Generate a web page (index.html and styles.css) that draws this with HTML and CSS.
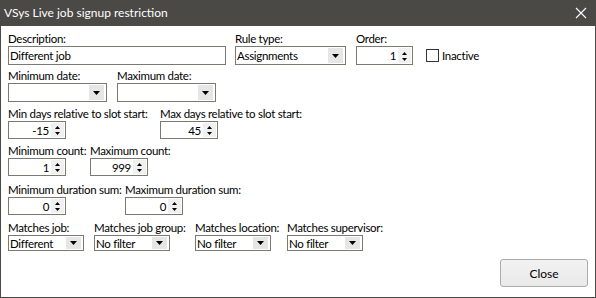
FILE: index.html
```html
<!DOCTYPE html>
<html lang="en">
<head>
  <meta charset="UTF-8" />
  <title>VSys Live job signup restriction</title>
  <link rel="stylesheet" href="styles.css">
</head>
<body>
  <div class="window">
    <div class="titlebar">
      <span class="title">VSys Live job signup restriction</span>
      <svg class="close-x" width="12" height="12" viewBox="0 0 12 12">
        <path d="M1 1 L11 11 M11 1 L1 11" stroke="#fff" stroke-width="1.1" fill="none"/>
      </svg>
    </div>

    <div class="content">
      <!-- row 1 -->
      <div class="row row-1">
        <div class="field f-desc">
          <label>Description:</label>
          <div class="box textbox w-desc">Different job</div>
        </div>
        <div class="field f-rule">
          <label>Rule type:</label>
          <div class="box combo w-rule"><span class="val">Assignments</span><span class="drop"><svg width="15" height="15" viewBox="0 0 15 15"><polygon points="4,6 11,6 7.5,10" fill="#000"/></svg></span></div>
        </div>
        <div class="field f-order">
          <label>Order:</label>
          <div class="box spin w-order"><span class="num">1</span><span class="arrows"><svg width="13" height="16" viewBox="0 0 13 16"><polygon points="4,7 6.5,4 9,7" fill="#000"/><polygon points="4,10 6.5,13 9,10" fill="#000"/></svg></span></div>
        </div>
        <div class="check-wrap">
          <span class="checkbox"></span>
          <span class="check-label">Inactive</span>
        </div>
      </div>

      <!-- row 2 -->
      <div class="row row-2">
        <div class="field f-mindate">
          <label>Minimum date:</label>
          <div class="box combo w-date"><span class="val"></span><span class="drop"><svg width="15" height="15" viewBox="0 0 15 15"><polygon points="4,6 11,6 7.5,10" fill="#000"/></svg></span></div>
        </div>
        <div class="field">
          <label>Maximum date:</label>
          <div class="box combo w-date"><span class="val"></span><span class="drop"><svg width="15" height="15" viewBox="0 0 15 15"><polygon points="4,6 11,6 7.5,10" fill="#000"/></svg></span></div>
        </div>
      </div>

      <!-- row 3 -->
      <div class="row row-3">
        <div class="field f-mindays">
          <label>Min days relative to slot start:</label>
          <div class="box spin sm w-spin"><span class="num">-15</span><span class="arrows"><svg width="13" height="16" viewBox="0 0 13 16"><polygon points="4,7 6.5,4 9,7" fill="#000"/><polygon points="4,10 6.5,13 9,10" fill="#000"/></svg></span></div>
        </div>
        <div class="field">
          <label>Max days relative to slot start:</label>
          <div class="box spin sm w-spin"><span class="num">45</span><span class="arrows"><svg width="13" height="16" viewBox="0 0 13 16"><polygon points="4,7 6.5,4 9,7" fill="#000"/><polygon points="4,10 6.5,13 9,10" fill="#000"/></svg></span></div>
        </div>
      </div>

      <!-- row 4 -->
      <div class="row row-4">
        <div class="field f-mincount">
          <label>Minimum count:</label>
          <div class="box spin sm w-spin"><span class="num">1</span><span class="arrows"><svg width="13" height="16" viewBox="0 0 13 16"><polygon points="4,7 6.5,4 9,7" fill="#000"/><polygon points="4,10 6.5,13 9,10" fill="#000"/></svg></span></div>
        </div>
        <div class="field">
          <label>Maximum count:</label>
          <div class="box spin sm w-spin"><span class="num">999</span><span class="arrows"><svg width="13" height="16" viewBox="0 0 13 16"><polygon points="4,7 6.5,4 9,7" fill="#000"/><polygon points="4,10 6.5,13 9,10" fill="#000"/></svg></span></div>
        </div>
      </div>

      <!-- row 5 -->
      <div class="row row-5">
        <div class="field f-mindur">
          <label>Minimum duration sum:</label>
          <div class="box spin sm w-spin"><span class="num">0</span><span class="arrows"><svg width="13" height="16" viewBox="0 0 13 16"><polygon points="4,7 6.5,4 9,7" fill="#000"/><polygon points="4,10 6.5,13 9,10" fill="#000"/></svg></span></div>
        </div>
        <div class="field">
          <label>Maximum duration sum:</label>
          <div class="box spin sm w-spin"><span class="num">0</span><span class="arrows"><svg width="13" height="16" viewBox="0 0 13 16"><polygon points="4,7 6.5,4 9,7" fill="#000"/><polygon points="4,10 6.5,13 9,10" fill="#000"/></svg></span></div>
        </div>
      </div>

      <!-- row 6 -->
      <div class="row row-6">
        <div class="field f-mjob">
          <label>Matches job:</label>
          <div class="box combo short w-match"><span class="val">Different</span><span class="drop"><svg width="15" height="14" viewBox="0 0 15 14"><polygon points="4,5 11,5 7.5,9" fill="#000"/></svg></span></div>
        </div>
        <div class="field f-mgroup">
          <label>Matches job group:</label>
          <div class="box combo short w-match"><span class="val">No filter</span><span class="drop"><svg width="15" height="14" viewBox="0 0 15 14"><polygon points="4,5 11,5 7.5,9" fill="#000"/></svg></span></div>
        </div>
        <div class="field f-mloc">
          <label>Matches location:</label>
          <div class="box combo short w-match"><span class="val">No filter</span><span class="drop"><svg width="15" height="14" viewBox="0 0 15 14"><polygon points="4,5 11,5 7.5,9" fill="#000"/></svg></span></div>
        </div>
        <div class="field">
          <label>Matches supervisor:</label>
          <div class="box combo short w-match"><span class="val">No filter</span><span class="drop"><svg width="15" height="14" viewBox="0 0 15 14"><polygon points="4,5 11,5 7.5,9" fill="#000"/></svg></span></div>
        </div>
      </div>

      <div class="footer">
        <button class="btn">Close</button>
      </div>
    </div>
  </div>
</body>
</html>
```

FILE: styles.css
```css
* {
  box-sizing: border-box;
}

body {
  margin: 0;
  font-family: "Segoe UI", Lato, "Noto Sans", sans-serif;
  font-size: 12px;
  color: #000;
  background: #fff;
}

.window {
  width: 596px;
  height: 298px;
  border: 1px solid #4a4946;
  border-top: none;
  background: #fff;
  display: flex;
  flex-direction: column;
}

.titlebar {
  height: 26px;
  margin: 0 -1px;
  background: #4a4946;
  display: flex;
  align-items: center;
  justify-content: space-between;
  padding: 0 9px 0 4px;
}

.title {
  color: #fff;
  line-height: 26px;
}

.close-x {
  display: block;
  margin-top: -1px;
}

.content {
  flex: 1;
  display: flex;
  flex-direction: column;
  padding: 6px 7px 0 7px;
  font-size: 11.5px;
  letter-spacing: -0.3px;
}

.row {
  display: flex;
  align-items: flex-end;
}

.row-2 { margin-top: 4px; }
.row-3 { margin-top: 5px; }
.row-4 { margin-top: 5px; }
.row-5 { margin-top: 7px; }
.row-6 { margin-top: 6px; }

.field {
  display: flex;
  flex-direction: column;
}

.field label {
  display: block;
  line-height: 13px;
  height: 14px;
  padding-bottom: 1px;
  white-space: nowrap;
}

/* horizontal spacing: each field is as wide as the gap to the next one */
.f-desc { width: 227px; }
.f-rule { width: 121px; }
.f-order { width: 70px; }
.f-mindate { width: 109px; }
.f-mindays { width: 152px; }
.f-mincount { width: 82px; }
.f-mindur { width: 117px; }
.f-mjob { width: 86px; }
.f-mgroup { width: 101px; }
.f-mloc { width: 92px; }

.box {
  border: 1px solid #7a7a6e;
  background: #fff;
  height: 19px;
  display: flex;
  align-items: center;
  white-space: nowrap;
  overflow: hidden;
}

.box.sm { height: 18px; }
.box.short { height: 16px; }

.textbox {
  padding-left: 1px;
}

.w-desc { width: 218px; }
.w-rule { width: 111px; }
.w-order { width: 57px; }
.w-date { width: 99px; }
.w-spin { width: 58px; }
.w-match { width: 76px; }

.combo .val {
  flex: 1;
  padding-left: 1px;
}

.combo .drop {
  width: 15px;
  height: 15px;
  margin-right: 2px;
  background: #e6e6e6;
  display: flex;
}

.combo.short .drop {
  height: 12px;
  align-items: center;
}

.combo .drop svg {
  display: block;
}

.spin .num {
  flex: 1;
  text-align: right;
  padding-right: 2px;
}

.spin .arrows {
  width: 13px;
  height: 15px;
  margin-right: 1px;
  background: #f0f0f0;
  display: flex;
  align-items: center;
}

.spin.sm .arrows {
  height: 14px;
}

.spin .arrows svg {
  display: block;
}

.check-wrap {
  display: flex;
  align-items: center;
  height: 19px;
}

.checkbox {
  width: 13px;
  height: 13px;
  border: 1px solid #333;
  background: #fff;
  margin-right: 3px;
}

.footer {
  display: flex;
  justify-content: flex-end;
  margin-top: 8px;
}

.btn {
  width: 88px;
  height: 28px;
  font-family: inherit;
  font-size: 12px;
  color: #000;
  background: linear-gradient(#f2f2f2, #e9e9e9);
  border: 1px solid #acacac;
  border-radius: 3px;
  padding: 0;
}
```
